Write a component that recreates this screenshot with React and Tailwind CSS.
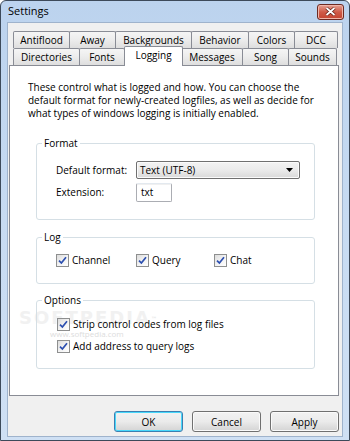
const ROW1 = [
  { label: 'Antiflood', w: 57 },
  { label: 'Away', w: 47 },
  { label: 'Backgrounds', w: 77 },
  { label: 'Behavior', w: 58 },
  { label: 'Colors', w: 47 },
  { label: 'DCC', w: 44 },
];

const ROW2 = [
  { label: 'Directories', w: 67 },
  { label: 'Fonts', w: 46 },
  { label: 'Logging', w: 57, active: true },
  { label: 'Messages', w: 62 },
  { label: 'Song', w: 47 },
  { label: 'Sounds', w: 49 },
];

function Tab({ label, w, active }) {
  if (active) {
    return (
      <div
        style={{ width: w + 2 }}
        className="relative z-10 -mx-px -mt-[2px] h-[20px] shrink-0 rounded-t-[2px] border border-b-0 border-[#898c95] bg-white pt-[1px] text-center leading-[15px]"
      >
        {label}
      </div>
    );
  }
  return (
    <div
      style={{ width: w }}
      className="-ml-px h-[17px] shrink-0 rounded-t-[2px] border border-b-0 border-[#898c95] bg-gradient-to-b from-[#f5f5f5] via-[#ececec] to-[#dedede] text-center leading-[16px] first:ml-0"
    >
      {label}
    </div>
  );
}

function Check({ children }) {
  return (
    <div className="flex items-center gap-[3px]">
      <span className="flex h-[13px] w-[13px] items-center justify-center border border-[#8e8f8f] bg-gradient-to-br from-[#dcdcdc] via-[#f2f2f2] to-white">
        <svg width="9" height="9" viewBox="0 0 9 9">
          <path d="M1 4.6 L3.4 7 L8 1.2" fill="none" stroke="#2c4fb0" strokeWidth="1.7" />
        </svg>
      </span>
      <span className="leading-[13px]">{children}</span>
    </div>
  );
}

function Group({ title, className, children }) {
  return (
    <div className={`relative ml-[26px] w-[279px] rounded-[3px] border border-[#d5dfe5] ${className}`}>
      <span className="absolute -top-[7px] left-[5px] bg-white px-[2px] leading-[13px]">{title}</span>
      {children}
    </div>
  );
}

function Button({ children, primary }) {
  return (
    <button
      className={`h-[21px] w-[69px] rounded-[3px] border bg-gradient-to-b from-[#f2f2f2] via-[#ebebeb] to-[#d4d4d4] leading-[18px] ${
        primary ? 'border-[#3c7fb1] shadow-[inset_0_0_0_1px_#48d8fb]' : 'border-[#707070] shadow-[inset_0_0_0_1px_#fafafa]'
      }`}
    >
      {children}
    </button>
  );
}

export default function App() {
  return (
    <div
      className="flex h-[441px] w-[350px] flex-col overflow-hidden rounded-t-[6px] border border-[#3d4a5a] bg-gradient-to-b from-[#bcd3ee] via-[#c7dbf2] to-[#cfe0f4] text-[10px] text-black"
      style={{ fontFamily: '"Open Sans", sans-serif' }}
    >
      {/* title bar */}
      <div className="flex h-[21px] shrink-0 items-center justify-between pl-[7px] pr-[5px]">
        <span className="text-[11px]">Settings</span>
        <div className="flex h-[16px] w-[27px] items-center justify-center rounded-[3px] border border-[#6d2a22] bg-gradient-to-b from-[#e5a093] via-[#cf5b48] to-[#c3432f] shadow-[inset_0_0_0_1px_#f0b6aa]">
          <svg width="11" height="9" viewBox="0 0 11 9">
            <path d="M1.5 1 L9.5 8 M9.5 1 L1.5 8" stroke="#5a1a12" strokeWidth="3.2" />
            <path d="M1.5 1 L9.5 8 M9.5 1 L1.5 8" stroke="#ffffff" strokeWidth="1.8" />
          </svg>
        </div>
      </div>

      {/* client area */}
      <div className="mx-[6px] mb-[4px] flex flex-1 flex-col border border-[#9fb3cc] bg-[#f0f0f0] pb-[4px] pl-[1px] pr-[3px]">
        <div className="pl-[4px] pt-[8px]">
          <div className="flex">
            {ROW1.map((t) => <Tab key={t.label} {...t} />)}
          </div>
          <div className="flex h-[17px]">
            {ROW2.map((t) => <Tab key={t.label} {...t} />)}
          </div>
        </div>

        <div className="relative h-[331px] border border-[#898c95] bg-white">
          {/* watermark */}
          <div className="pointer-events-none absolute left-[9px] top-[238px] select-none">
            <div className="text-[18px] font-bold tracking-[2px] text-[#f1f1f1]" style={{ fontFamily: '"DejaVu Sans", sans-serif' }}>
              SOFTPEDIA<sup className="text-[6px] text-[#e6e6e6]">™</sup>
            </div>
            <div className="ml-[31px] -mt-[3px] text-[8px] text-[#dddddd]">www.softpedia.com</div>
          </div>

          <div className="relative pt-[15px]">
            <p className="pl-[18px] pr-[8px] leading-[13px]">
              These control what is logged and how. You can choose the
              <br />
              default format for newly-created logfiles, as well as decide for
              <br />
              what types of windows logging is initially enabled.
            </p>

            <Group title="Format" className="mt-[23px] pb-[17px] pl-[19px] pt-[17px]">
              <div className="flex items-center">
                <span className="w-[80px]">Default format:</span>
                <div className="flex h-[18px] w-[164px] items-center justify-between rounded-[2px] border border-[#707070] bg-gradient-to-b from-[#f3f3f3] via-[#ebebeb] to-[#d9d9d9] pl-[3px] pr-[6px] shadow-[inset_0_0_0_1px_#fbfbfb]">
                  <span>Text (UTF-8)</span>
                  <svg width="7" height="4" viewBox="0 0 7 4">
                    <path d="M0 0 H7 L3.5 4 Z" fill="#000" />
                  </svg>
                </div>
              </div>
              <div className="mt-[4px] flex items-center">
                <span className="w-[80px]">Extension:</span>
                <div className="flex h-[19px] w-[36px] items-center rounded-[2px] border border-[#abadb3] border-t-[#e3e9ef] pl-[4px] shadow-[inset_0_1px_0_#f0f0f0]">
                  txt
                </div>
              </div>
            </Group>

            <Group title="Log" className="mt-[17px] flex pb-[16px] pl-[19px] pt-[16px]">
              <div className="w-[80px]"><Check>Channel</Check></div>
              <div className="w-[78px]"><Check>Query</Check></div>
              <Check>Chat</Check>
            </Group>

            <Group title="Options" className="mt-[16px] flex flex-col gap-[9px] pb-[15px] pl-[20px] pt-[17px]">
              <Check>Strip control codes from log files</Check>
              <Check>Add address to query logs</Check>
            </Group>
          </div>
        </div>

        <div className="mt-[15px] flex justify-end gap-[9px]">
          <Button primary>OK</Button>
          <Button>Cancel</Button>
          <Button>Apply</Button>
        </div>
      </div>
    </div>
  );
}
